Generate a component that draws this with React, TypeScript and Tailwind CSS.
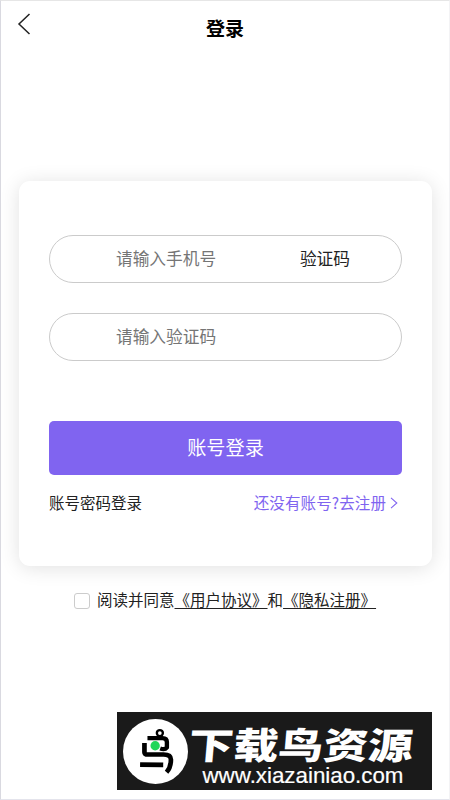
import React from "react";

type FieldProps = {
  placeholder: string;
  action?: string;
};

const Field = ({ placeholder, action }: FieldProps) => {
  return (
    <div className="flex h-12 w-full items-center rounded-full border border-[#cbcbcb] pl-[66px] pr-[51px]">
      <input
        className="w-[150px] bg-transparent text-[16.7px] outline-none placeholder:text-[#757575]"
        placeholder={placeholder}
      />
      {action && (
        <button className="ml-auto whitespace-nowrap text-[16.7px] text-[#222]">{action}</button>
      )}
    </div>
  );
};

const BirdLogo = () => {
  return (
    <svg viewBox="37 45 194 194" className="h-[65px] w-[65px] shrink-0">
      <circle cx="134" cy="142" r="97" fill="#fff" />
      <g fill="none" stroke="#000" strokeLinejoin="round">
        <circle cx="147" cy="87" r="9" strokeWidth="7" />
        <path d="M110 102H155Q168 102 168 114V130Q162 138 148 133" strokeWidth="13" />
        <path d="M101 117V144Q101 151 112 151H158Q180 151 180 166Q180 190 167 204" strokeWidth="14" />
        <path d="M88 181L157 182" strokeWidth="14" />
      </g>
      <circle cx="133" cy="125" r="14" fill="#20d65a" />
    </svg>
  );
};

const App = () => {
  return (
    <div className="flex h-[800px] w-[450px] flex-col overflow-hidden border border-b-[#e4e4ec] border-l-[#d9d9e0] border-r-[#f3f3f5] border-t-[#e6e6e6] bg-white font-['Noto_Sans_CJK_SC','Liberation_Sans',sans-serif] text-[#222]">
      <header className="grid h-[52px] shrink-0 grid-cols-[1fr_auto_1fr] items-center pl-[16px] pr-[16px]">
        <svg viewBox="0 0 14 22" className="-mt-[6px] h-[22px] w-[14px]" fill="none" stroke="#222" strokeWidth="1.5">
          <path d="M12.5 1L2 11L12.5 21" />
        </svg>
        <h1 className="text-[19px] font-bold leading-none text-black">登录</h1>
      </header>

      <main className="ml-[18px] mt-[128px] h-[385px] w-[413px] shrink-0 rounded-[11px] bg-white px-[30px] pt-[54px] shadow-[0_2px_20px_rgba(0,0,0,0.12)]">
        <form className="flex flex-col gap-[30px]" onSubmit={(e) => e.preventDefault()}>
          <Field placeholder="请输入手机号" action="验证码" />
          <Field placeholder="请输入验证码" />
          <button className="mt-[30px] h-[54px] w-full rounded-[5px] bg-[#8064f0] pb-[2px] text-[19.2px] text-white">
            账号登录
          </button>
        </form>
        <div className="mt-[16px] flex h-6 items-center justify-between text-[15.5px]">
          <span>账号密码登录</span>
          <a className="flex items-center text-[#8064f0]">
            <span className="tracking-[0.1px]">还没有账号?去注册</span>
            <svg viewBox="0 0 8 12" className="ml-[4px] mr-[4px] h-3 w-2" fill="none" stroke="currentColor" strokeWidth="1.1">
              <path d="M1 0.8L6.8 6L1 11.2" />
            </svg>
          </a>
        </div>
      </main>

      <label className="ml-[73px] mt-[22px] flex h-6 shrink-0 items-center whitespace-nowrap text-[15.5px]">
        <span className="mr-[7px] mt-[2px] h-4 w-4 rounded-[3px] border border-[#ccc]" />
        阅读并同意
        <a className="underline underline-offset-2">《用户协议》</a>和
        <a className="underline underline-offset-2">《隐私注册》</a>
      </label>

      <footer className="mb-[9px] ml-[116px] mt-auto flex h-[78px] w-[315px] shrink-0 items-center bg-[#1a1a1a] pl-[6px] text-white">
        <BirdLogo />
        <svg viewBox="0 0 238 78" className="h-[78px] w-[238px]" fill="#fff">
          <text
            fontFamily="Noto Sans CJK SC, sans-serif"
            fontSize="36.5"
            fontWeight="900"
            transform="translate(-0.5 46.5) skewX(-5) scale(1.23 1)"
          >
            下载鸟资源
          </text>
          <text
            fontFamily="Liberation Sans, sans-serif"
            fontSize="22"
            transform="translate(14.5 70.5) scale(1.015 1)"
            stroke="#fff"
            strokeWidth="0.2"
          >
            www.xiazainiao.com
          </text>
        </svg>
      </footer>
    </div>
  );
};

export default App;
